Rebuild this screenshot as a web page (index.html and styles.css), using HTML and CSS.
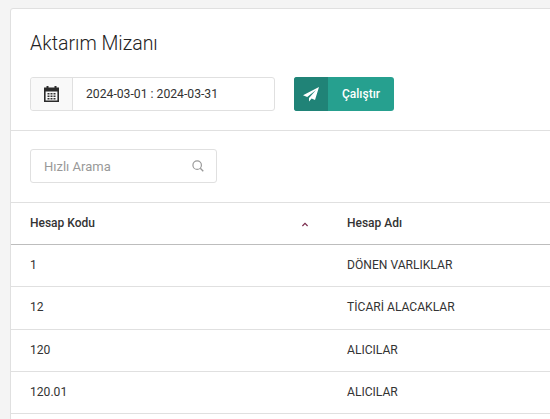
FILE: index.html
```html
<!DOCTYPE html>
<html lang="tr">
<head>
<meta charset="utf-8">
<title>Aktarım Mizanı</title>
<link rel="stylesheet" href="styles.css">
</head>
<body>
<main class="card">
  <section class="head">
    <h1 class="title">Aktarım Mizanı</h1>
    <div class="controls">
      <div class="range">
        <span class="range-icon">
          <svg width="15" height="16" viewBox="0 0 15 16"><path fill="#2b2b2b" fill-rule="evenodd" d="M0 1.5h2.5V0h2v1.5h6V0h2v1.5H15V16H0zM1.6 5.5v8.9h11.8V5.5z"/><path fill="#333" d="M3.5 7h2v1.5h-2zM6.5 7h2v1.5h-2zM9.5 7h2v1.5h-2zM3.5 9.5h2V11h-2zM6.5 9.5h2V11h-2zM9.5 9.5h2V11h-2zM3.5 12h2v1.5h-2zM6.5 12h2v1.5h-2zM9.5 12h2v1.5h-2z"/></svg>
        </span>
        <span class="range-value">2024-03-01 : 2024-03-31</span>
      </div>
      <button class="run" type="button">
        <span class="run-icon">
          <svg width="16" height="15" viewBox="0 0 16 15"><path fill="#fff" d="M16 0 0 8.2l4.2 1.9L13 3 6 11v3.6l2.6-3 3.4 1.5z"/></svg>
        </span>
        <span class="run-label">Çalıştır</span>
      </button>
    </div>
  </section>
  <section class="search-bar">
    <div class="search">
      <span class="placeholder">Hızlı Arama</span>
      <svg width="12" height="12" viewBox="0 0 13 13"><circle cx="5.6" cy="5.6" r="4.6" fill="none" stroke="#999" stroke-width="1.3"/><path d="m9 9 3.2 3.2" stroke="#999" stroke-width="1.5" fill="none"/></svg>
    </div>
  </section>
  <div class="table">
    <div class="row row-head">
      <div class="cell code">Hesap Kodu
        <svg class="sort" width="8" height="5" viewBox="0 0 8 5"><path d="M1.4 4 4 1.4 6.6 4" fill="none" stroke="#7b2d4e" stroke-width="1.2"/></svg>
      </div>
      <div class="cell">Hesap Adı</div>
    </div>
    <div class="row"><div class="cell code">1</div><div class="cell">DÖNEN VARLIKLAR</div></div>
    <div class="row"><div class="cell code">12</div><div class="cell">TİCARİ ALACAKLAR</div></div>
    <div class="row"><div class="cell code">120</div><div class="cell">ALICILAR</div></div>
    <div class="row"><div class="cell code">120.01</div><div class="cell">ALICILAR</div></div>
  </div>
</main>
</body>
</html>
```
FILE: styles.css
```css
* { box-sizing: border-box; }
html, body { height: 100%; }
body {
  margin: 0;
  padding: 8px 0 0 10px;
  background: #f4f4f4;
  font-family: Roboto, "Liberation Sans", sans-serif;
  color: #333;
  overflow: hidden;
}
.card {
  width: 560px;
  min-height: 430px;
  background: #fff;
  border: 1px solid #e0e0e0;
  border-radius: 3px 0 0 0;
}
.head {
  height: 122px;
  padding: 23px 19px 0;
  border-bottom: 1px solid #e0e0e0;
}
.title {
  margin: 0;
  font-size: 19.5px;
  font-weight: 300;
  line-height: 24px;
  color: #222;
}
.controls {
  display: flex;
  margin-top: 21px;
  gap: 19px;
}
.range {
  display: flex;
  width: 245px;
  height: 34px;
  border: 1px solid #e0e0e0;
  border-radius: 3px;
  font-size: 12.2px;
}
.range-icon {
  display: flex;
  align-items: center;
  justify-content: center;
  width: 42px;
  background: #f9f9f9;
  border-right: 1px solid #e0e0e0;
  border-radius: 3px 0 0 3px;
}
.range-value {
  padding-left: 13px;
  line-height: 32px;
}
.run {
  display: flex;
  width: 100px;
  height: 34px;
  padding: 0;
  border: 0;
  border-radius: 3px;
  background: #26a08f;
  color: #fff;
  font: 500 12px Roboto, "Liberation Sans", sans-serif;
  overflow: hidden;
}
.run-icon {
  display: flex;
  align-items: center;
  justify-content: center;
  width: 34px;
  height: 34px;
  background: #208377;
}
.run-label {
  padding-left: 14px;
  line-height: 34px;
}
.search-bar {
  height: 72px;
  padding: 18px 19px 0;
  border-bottom: 1px solid #e0e0e0;
}
.search {
  display: flex;
  align-items: center;
  justify-content: space-between;
  width: 187px;
  height: 34px;
  padding: 0 12px 0 13px;
  border: 1px solid #e0e0e0;
  border-radius: 3px;
  font-size: 13px;
  color: #999;
}
.row {
  display: grid;
  grid-template-columns: 317px 1fr;
  height: 42.33px;
  padding-left: 19px;
  border-bottom: 1px solid #e0e0e0;
  font-size: 12.1px;
  line-height: 41px;
}
.row-head {
  height: 42px;
  border-bottom-color: #bdbdbd;
  font-size: 12px;
  font-weight: 500;
}
.code {
  position: relative;
}
.sort {
  position: absolute;
  left: 271px;
  top: 19px;
}
```
